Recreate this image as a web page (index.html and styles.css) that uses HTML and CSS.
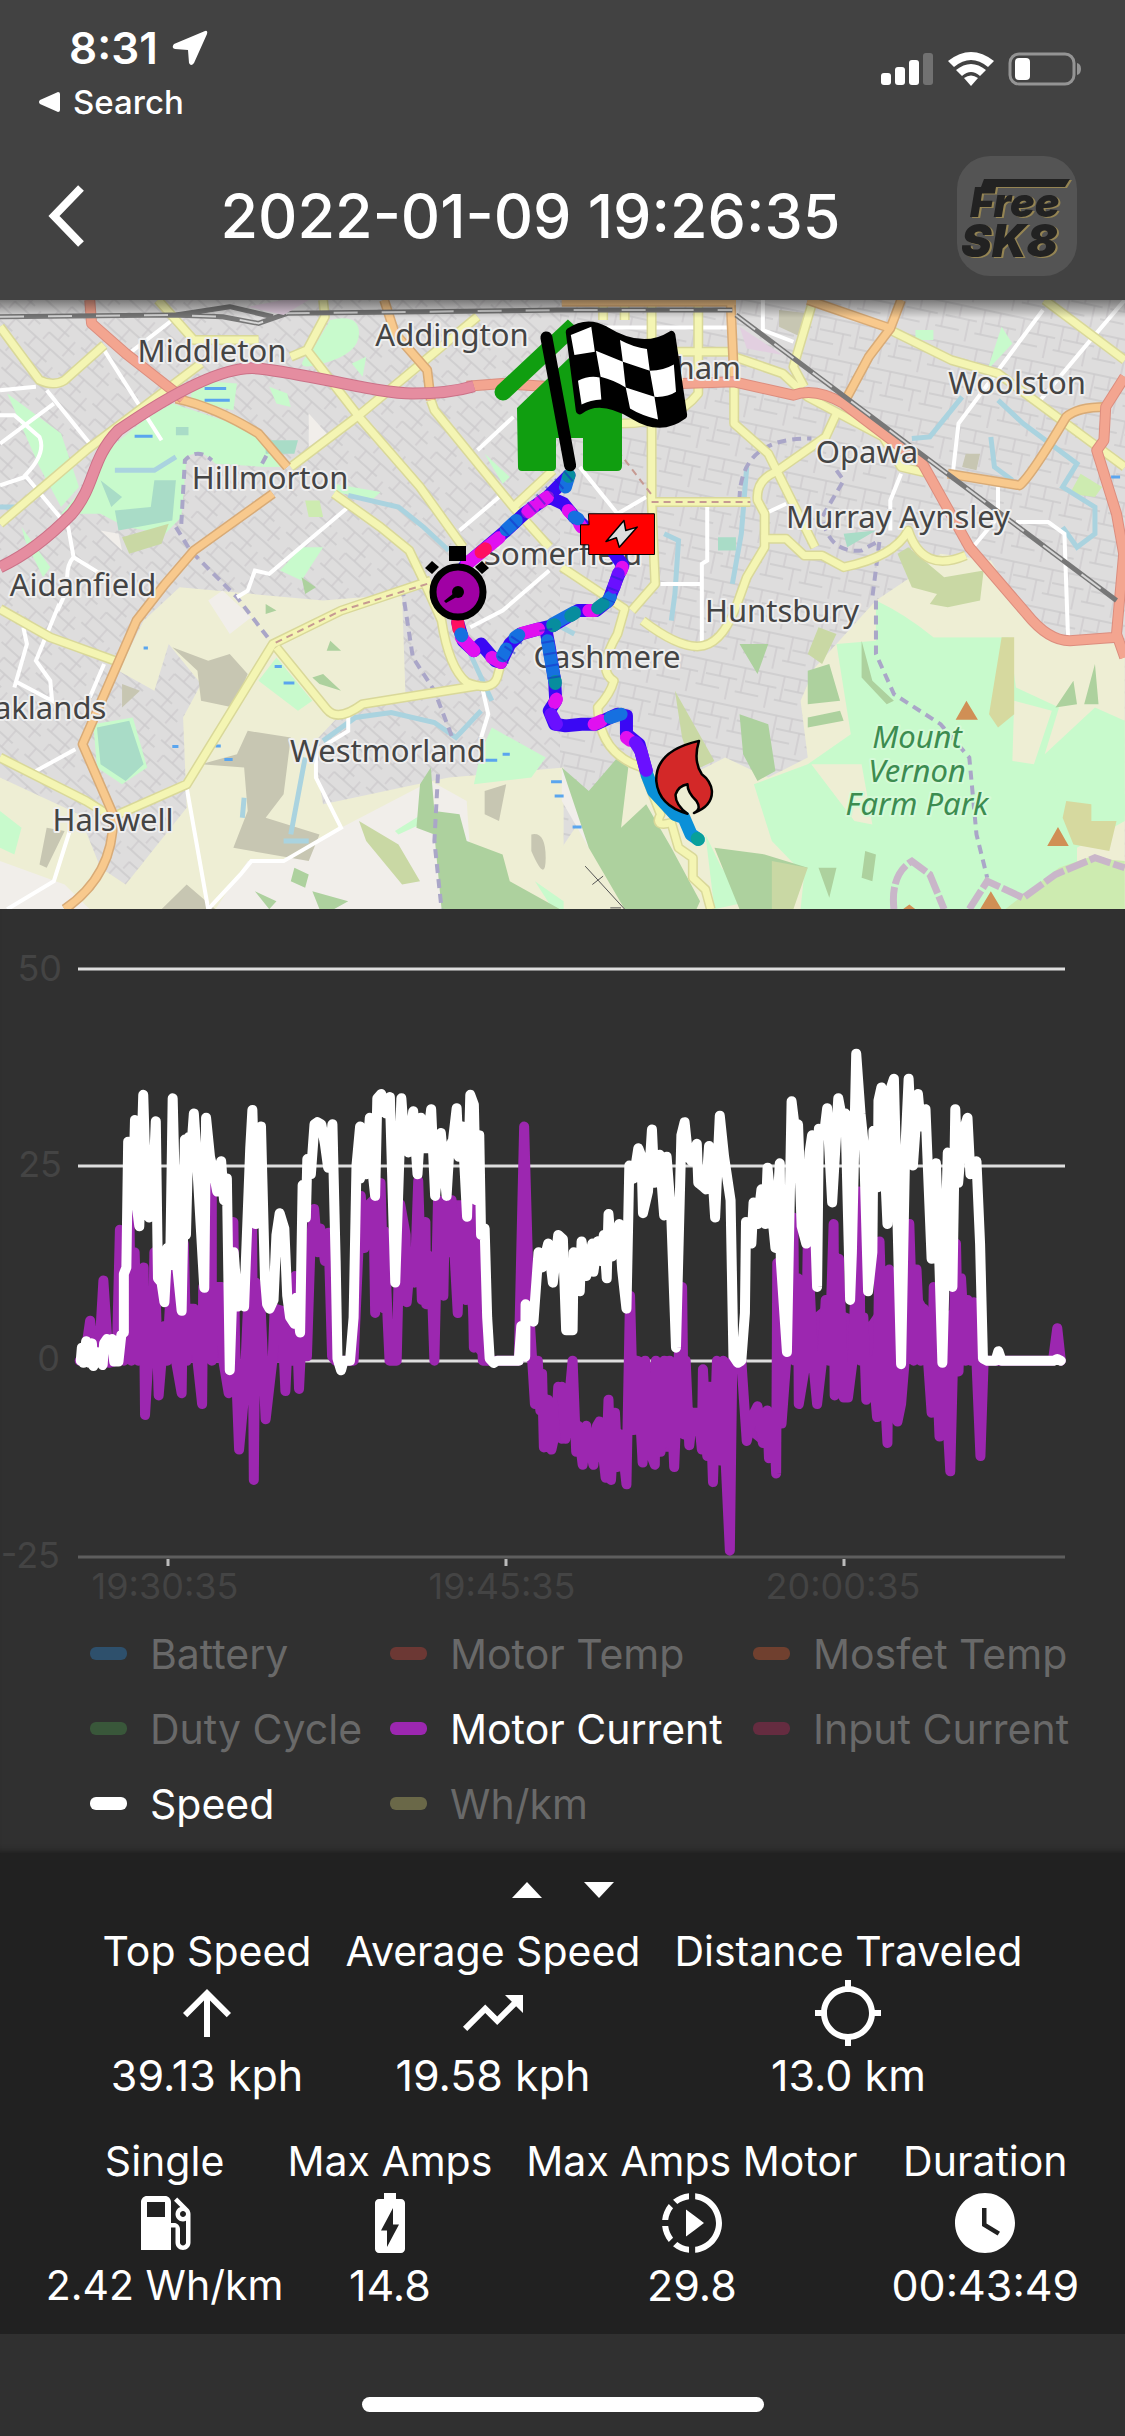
FILE: index.html
```html
<!DOCTYPE html>
<html lang="en">
<head>
<meta charset="utf-8">
<meta name="viewport" content="width=device-width, initial-scale=1">
<title>Ride log</title>
<link rel="stylesheet" href="styles.css">
</head>
<body>
<header class="header">
  <div class="status">
    <div class="status-left">
      <div class="clock">8:31
        <svg class="location" viewBox="0 0 36 36" aria-hidden="true"><path d="M33 1 2 14Q-1 18 3 19L16 20 17 33Q19 37 22 33L35 4Q36 0 33 1Z"/></svg>
      </div>
      <a class="back-app" href="#"><svg class="tri" viewBox="0 0 22 22" aria-hidden="true"><path d="M20 1 2 9Q0 11 2 13L20 21Q22 21 22 19V3Q22 1 20 1Z"/></svg>Search</a>
    </div>
    <svg class="radios" viewBox="0 0 204 36" aria-hidden="true">
      <rect x="0" y="22" width="10" height="12" rx="3"/><rect x="14" y="16" width="10" height="18" rx="3"/><rect x="28" y="9" width="10" height="25" rx="3"/><rect x="42" y="2" width="10" height="32" rx="3" opacity=".25"/>
      <path d="M67 10Q90-8 113 10L107 16Q90 2 73 16ZM75 19Q90 7 105 19L99 25Q90 17 81 25ZM83 27Q90 22 97 27L90 35Z"/>
      <rect x="129" y="3" width="64" height="30" rx="9" fill="none" stroke="#949494" stroke-width="3"/><rect x="134" y="7" width="15" height="22" rx="4"/><path d="M196 12Q200 13 200 18T196 24Z" fill="#949494"/>
    </svg>
  </div>
  <div class="appbar">
    <button class="back" aria-label="Back"><svg viewBox="0 0 36 62"><path d="M33 3 6 31 33 59" fill="none" stroke="#fff" stroke-width="8"/></svg></button>
    <h1 class="title">2022-01-09 19:26:35</h1>
    <svg class="logo" viewBox="0 0 120 120" role="img" aria-label="Free SK8">
      <rect width="120" height="120" rx="33" fill="#545454"/>
      <g class="logo-mark"><path d="M27 23H113L108 31H24Z"/><text class="logo-type logo-free" x="13" y="61">Free</text><text class="logo-type logo-sk" x="4" y="101">SK8</text></g>
    </svg>
  </div>
</header>

<main>
<svg class="map" viewBox="0 0 1125 609" role="img" aria-label="Map of the ride">
  <defs>
    <pattern id="streets" width="46" height="34" patternUnits="userSpaceOnUse" patternTransform="rotate(42)"><path d="M0 3H46M0 15H30M12 25H46M5 3V15M24 3V25M38 15V34M12 25V37" fill="none" stroke="#cccacc" stroke-width="1.3"/></pattern>
    <pattern id="streets2" width="40" height="40" patternUnits="userSpaceOnUse" patternTransform="rotate(12)"><path d="M0 5H40M8 18H40M0 30H24M6 5V30M22 5V18M32 18V45" fill="none" stroke="#cccacc" stroke-width="1.3"/></pattern>
    <g id="yellow">
      <path d="M0 80 110 240Q150 260 180 240L290 135M0 670 240 450 560 190M440 0 540 120 720 120M900 0 905 50 855 150 1000 350 1170 560 1290 740M810 170 855 150M1330 50 1000 345 810 500M1200 300 1210 330 1430 620 1530 740M1430 620 1540 510M930 580 1060 680 1140 750 1180 840 1230 960Q1250 1100 1300 1145 1370 1175 1385 1130L1395 1090M1200 840 950 930 760 1030 520 1450 330 1540M770 1040 910 1225Q940 1265 1010 1210L1330 1155M0 925 140 1010 320 1080M0 1370 240 1500 300 1540"/>
      <path d="M2910 0 3133 180M2480 90 2650 180 2780 220 3133 500M2265 0 2210 200 2240 260M2045 170 2180 220 2250 290 2460 410 2510 500 2590 520M2330 340 2300 410 2160 515Q2105 540 2110 600L2130 640V740L2080 830 2060 890Q2020 1020 1960 1035T1790 960M2045 250V370L2140 460 2270 740M2120 715H2190L2240 765H2290L2350 800Q2490 770 2530 690 2570 820 2690 765M1815 0V600L1825 850 1760 930M1945 0V280Q1880 370 1730 370M1740 0V60M1680 0V60M1880 155H2045M1815 605H2090"/>
      <path d="M1565 800 1740 925 1720 1000Q1660 1110 1710 1140 1700 1180 1665 1220 1670 1360 1790 1400L1840 1540Q1820 1580 1870 1565L1890 1640 1930 1670 1930 1730 1965 1765 1980 1824"/>
    </g>
    <path id="motorway" d="M0 800Q100 750 200 640C270 550 250 480 330 390Q600 190 720 205C880 225 1050 280 1150 280Q1250 280 1320 258"/>
    <path id="trunk" d="M250 0 255 70 350 160 510 295M1300 258 1400 250 1565 262 2045 245 2210 285Q2270 260 2350 310L2570 490 2700 740 2860 940Q2920 1020 2980 1020L3110 1010M3133 230 3080 320 3075 420 3055 450 3110 640 3130 760 3110 1000 3133 1070"/>
    <path id="primary" d="M490 295Q600 320 720 400L800 500M760 580 540 750 460 850 380 960 230 1330 315 1540Q320 1720 180 1824M1070 0 1100 100 1190 210 1200 300M2035 0 2045 240M2250 0 2480 85 2510 0M2480 85 2420 170 2360 290M1565 5H2050M2640 520 2840 555Q2870 530 2970 350 3000 320 3080 320"/>
    <path id="route" d="M1585 525 1525 590 1460 640 1410 690 1300 790 1278 820M1275 965 1290 1020 1320 1050 1340 1030 1380 1080 1395 1085 1420 1030 1450 1000 1500 985 1540 975 1610 930 1660 930 1695 900 1720 830 1735 795 1700 740 1640 690 1600 650 1570 610 1530 590M1520 985 1530 1040 1545 1140 1548 1200 1530 1230 1545 1270 1575 1275 1620 1270 1660 1270 1720 1240 1745 1245 1745 1300 1780 1330 1800 1410"/>
    <linearGradient id="shade" x1="0" y1="0" x2="0" y2="1"><stop stop-color="#000" stop-opacity=".45"/><stop offset="1" stop-color="#000" stop-opacity="0"/></linearGradient>
  </defs>
  <rect width="1125" height="609" fill="#dedddd"/>
  <rect width="560" height="609" fill="url(#streets)"/>
  <rect x="560" width="565" height="609" fill="url(#streets2)"/>

  <g transform="scale(.359 .334)" class="terrain">
    <g class="farm">
      <path d="M500 860 900 900 1120 880 1130 1200 1050 1200 940 1250 870 1330 900 1510 1250 1430 1570 1400 1570 1824 0 1824 0 1430 100 1480 220 1540 280 1700 350 1750 520 1520 510 1250 560 1150 470 1030 430 1170 330 1110 400 960Z"/>
      <path d="M1565 1640 1720 1390 1780 1400 1890 1440 2020 1370 2140 1430 2250 1370 2230 1200 2270 1100 2440 900 2550 820 2620 760 2760 780 2850 940 2930 1020 3133 1030V1824H1565Z"/>
    </g>
    <path fill="#f1eeea" d="M950 1580 1200 1440 1300 1500 1320 1824 600 1824 690 1680 800 1680ZM0 1680 180 1750 250 1824H0ZM620 870 700 950 640 1000 580 900ZM860 340 910 400 860 440ZM280 690 330 700 340 750ZM1565 1400 1610 1460 1680 1620 1640 1640 1565 1500Z"/>
    <g fill="#c7c6b2">
      <path d="M480 1040 580 1080 640 1060 690 1120 650 1220 560 1200 550 1110ZM690 1290 810 1310 790 1480 740 1550 890 1600 860 1680 650 1640 690 1530 680 1400 560 1390 660 1360ZM1350 1470 1410 1450 1390 1560 1350 1540ZM1480 1600Q1520 1590 1520 1670T1480 1650ZM520 1750 600 1824H450ZM340 1150 390 1170 340 1220ZM130 1580 180 1590 130 1700 110 1690Z"/>
      <path d="M2170 30 2250 40 2230 110 2170 80ZM2690 460 2730 460 2720 510 2680 500Z"/>
    </g>
    <g fill="#c8facc">
      <path d="M480 310 650 370Q770 440 800 500L740 500 600 490Q560 440 520 470L505 650 460 700 350 680 280 640 170 640 250 540 310 440 400 360ZM20 280 170 400 220 560 170 620 110 500ZM540 240 660 250 650 330 530 300ZM920 60Q1000 40 1000 100T900 190 870 150ZM930 550 1060 575 1040 595 930 575ZM1350 460 1420 530 1400 550ZM840 740 900 740 840 840 780 810ZM750 260 800 280 810 320 770 310ZM2790 80 2820 130 2750 210ZM60 680 140 800 120 830 70 720ZM980 190 1020 170 1010 230ZM2550 90H2600V120H2550Z"/>
      <path d="M260 1270 370 1250 410 1400 340 1450 270 1400ZM770 1070 870 1200 830 1230 720 1140ZM1370 1280 1520 1370 1480 1430 1320 1450 1340 1350ZM0 1530 60 1580 40 1660 0 1640ZM1100 1590 1190 1530 1170 1570 1110 1600ZM1490 1740 1570 1800V1824H1540Z"/>
      <path d="M2330 1030 2440 1020V900Q2520 940 2600 1010L2810 1010 2830 1160 2950 1220 2910 1360 3070 1400 3133 1480V1560L3000 1640 3000 1720 2800 1824H2230L2240 1720 2150 1620 2100 1450 2250 1390 2370 1300Z"/>
      <path d="M3050 1220 3133 1260V1540L2970 1540 2910 1360ZM1965 1600 2010 1700 2090 1800 1990 1824Z"/>
    </g>
    <path class="farm" d="M2260 1390 2400 1390 2430 1570 2380 1560ZM2600 1010 2650 900 2820 930 2820 1010ZM2825 1200 2930 1230 2880 1390 2820 1380Z"/>
    <g fill="#add19e">
      <path d="M1200 1400 1210 1530 1280 1540 1300 1620 1400 1660 1420 1740 1560 1824H1230L1210 1600 1160 1580 1170 1450ZM1565 1400 1640 1470 1720 1370 1750 1400 1730 1580 1800 1510 1870 1640 1950 1800 1940 1824H1740L1640 1640ZM1990 1640 2130 1660 2250 1700 2210 1740 2150 1824H2060ZM2060 1240 2140 1270 2160 1410 2110 1440 2070 1360ZM2250 1110 2310 1090 2340 1200 2250 1210ZM2250 1250 2340 1230 2350 1260 2250 1280ZM2400 1020 2430 1140 2490 1200 2470 1210 2400 1130ZM2060 1030 2140 1030 2110 1120ZM2990 1140 3000 1210 2940 1220ZM3050 1090 3060 1210 3020 1210ZM870 1770 970 1800 930 1824H890ZM710 1770 770 1800 750 1824ZM820 1700 860 1720 850 1760 810 1740ZM920 1020 950 1050 910 1050ZM870 1130 900 1120 950 1170 890 1150ZM2410 1650 2440 1660 2430 1740 2400 1730ZM2280 1700 2330 1700 2310 1790ZM840 830 880 860 850 880ZM740 910 770 930 740 940Z"/>
    </g>
    <g fill="#c9d8a4">
      <path d="M340 710 470 670 450 730 360 760ZM1000 1560 1110 1630 1170 1740 1120 1750 1020 1620ZM1880 1170 1990 1380 1930 1410 1900 1310ZM2280 980 2330 1000 2290 1090 2250 1060ZM2500 760 2540 860 2610 880 2590 910 2640 920 2730 900 2740 810 2630 830 2530 740ZM2150 1680 2250 1700 2210 1824H2150Z"/>
      <path d="M3010 520 3070 560 3050 590 2980 580ZM850 600 890 600 900 650 860 650Z" fill="#cdebb0"/>
      <path d="M3030 1670 3133 1680V1824H2800L2950 1700Z" fill="#cdebb0"/>
    </g>
    <path fill="#d6d99f" d="M2790 1010 2825 1010 2825 1240 2780 1280 2755 1240ZM2970 1500 3040 1510 3040 1560 3110 1560 3090 1650 2990 1630 2960 1550Z"/>
    <g fill="#a9dcc7"><path d="M430 540 490 540 480 660 330 690 320 630 420 620ZM280 540 340 590 310 620ZM490 380 525 380V405H490ZM740 420 830 420 820 460 740 460ZM270 1280 360 1260 400 1390 350 1440 280 1390ZM2000 710 2050 710 2050 750 2000 750ZM2350 700 2440 690 2360 740Z"/></g>
    <g fill="none" stroke="#aad3df" stroke-width="5">
      <path d="M0 620 60 620M970 585 1110 620 1180 680 1250 750M900 1320 990 1250 1090 1235 1210 1265 1270 1310 1340 1230M850 1370 810 1600M790 1620H860M680 1490 675 1550M1310 1060 1370 1200M320 510 430 510 490 470M1565 980 1600 1000M2540 415 2590 410 2680 290M2780 300 2850 370 3000 490 2960 560 3050 620 3050 700 3000 740 2960 680M2760 410 2770 500 2820 540M1850 700 1890 720 1880 880 1870 960M2080 500 2065 700 2040 850"/>
    </g>
    <path stroke="#5aa5ee" stroke-width="3" d="M375 408H425M570 265H630M570 300H640M765 1097H785M790 1147H820M600 1335H615M625 1376H648M480 1337H497M1350 1378H1385M1400 1360H1420M1535 1442H1565M1545 1485H1570M1595 1578H1620M3095 530H3120M400 1042H412"/>
    <path fill="none" stroke="#aaa6c8" stroke-width="4" stroke-dasharray="9 6" d="M505 670 515 480Q550 440 590 480M730 490 750 450M2060 600Q2060 410 2260 415M2330 510 2350 540 2290 650Q2310 760 2400 750L2450 720 2430 890M1220 1420 1210 1620 1230 1824M490 680 530 750 660 890 760 1030M1120 860 1150 1070 1210 1170 1260 1310M2440 900 2440 1060 2490 1180 2620 1270 2700 1370 2720 1600 2750 1730"/>
    <path fill="none" stroke="#c9b6c9" stroke-width="7" stroke-dasharray="22 3" d="M2490 1824Q2480 1720 2540 1680L2590 1720 2630 1824M2700 1824 2750 1740 2850 1790 2940 1720 3050 1670 3133 1700"/>
    <path fill="none" stroke="#fff" stroke-width="4" d="M0 270 100 260M290 150 450 420M130 270 250 430M0 430 150 310M0 345H40L110 410Q130 460 70 525L190 680 205 770 280 820M0 555 70 530M205 770Q180 800 190 860L160 930M360 160 480 60M970 620 750 820 710 810 690 870 660 890M1430 350 1330 450M1390 590 1280 690M1530 810 1400 930 1310 980M165 910 100 1080 140 1140 145 1200 40 1140M65 980 75 1030 40 1160M290 1090 250 1190M210 1345 100 1410M200 1570 150 1740 20 1824M520 1460 580 1824 670 1720 700 1680H790L950 1580 880 1430V1350L970 1290V1240M1345 1170 1360 1240 1340 1310M1640 82H2030M2125 0V90L2210 125M2905 30 2670 370 2655 510M3133 0 3030 130 2890 310M1615 500 1720 640 1800 590M1970 620V780L1955 790V1030M1840 850H1955M2510 520 2480 600V690M2780 560V650L2710 740M2830 665H2920L2965 700 2975 1010M2190 610 2130 640"/>
    <g fill="none" stroke-linejoin="round">
      <use href="#yellow" stroke="#d9d899" stroke-width="10"/><use href="#yellow" stroke="#f4f5b3" stroke-width="7"/>
      <path stroke="#c69a92" stroke-width="2" stroke-dasharray="7 5" d="M1190 850 950 930 760 1030M1815 605H2090M1720 450 1820 590"/>
      <use href="#primary" stroke="#d8ab77" stroke-width="10"/><use href="#primary" stroke="#f8c98d" stroke-width="7"/>
      <use href="#trunk" stroke="#dc8d7e" stroke-width="11"/><use href="#trunk" stroke="#f3a590" stroke-width="9"/>
      <use href="#motorway" stroke="#cb7187" stroke-width="12"/><use href="#motorway" stroke="#e58da0" stroke-width="10"/>
      <path stroke="#777" stroke-width="5" d="M0 50 480 45 620 50 720 70 800 40 1565 30 2040 30M490 45 640 20 760 50M2050 45 3110 900"/>
      <path stroke="#d6d6d6" stroke-width="2" stroke-dasharray="24 24" d="M0 50 480 45 620 50 720 70 800 40 1565 30 2040 30M2050 45 3110 900"/>
      <path stroke="#555" stroke-width="1" d="M1630 1695 1740 1824M1650 1750 1680 1725M1700 1820H1730"/>
    </g>
    <path fill="#e2cfe0" d="M2060 80 2180 165 2080 145ZM690 20 790 0H860L790 45Z"/>
    <path fill="#d08f55" d="M2662 1257 2692 1200 2724 1257ZM2917 1635 2947 1578 2977 1635ZM2730 1824 2760 1770 2790 1824ZM2515 1824 2533 1810 2550 1824Z"/>
  </g>

  <g class="place">
    <text x="212" y="62">Middleton</text><text x="452" y="46">Addington</text><text x="270" y="189">Hillmorton</text><text x="83" y="296">Aidanfield</text><text x="563" y="265">Somerfield</text><text x="664" y="79">Sydenham</text><text x="1017" y="94">Woolston</text><text x="867" y="163">Opawa</text><text x="898" y="228">Murray Aynsley</text><text x="782" y="322">Huntsbury</text><text x="607" y="368">Cashmere</text><text x="388" y="462">Westmorland</text><text x="113" y="531">Halswell</text><text x="38" y="419">Oaklands</text>
  </g>
  <g class="place place-park"><text x="917" y="448">Mount</text><text x="917" y="482">Vernon</text><text x="917" y="515">Farm Park</text></g>

  <path fill="#109e10" d="M517 108 569 58 622 108V166Q622 171 617 171H587Q583 171 583 167V138H556V167Q556 171 552 171H522Q518 171 518 167Z"/>
  <path fill="none" stroke="#109e10" stroke-width="17" stroke-linecap="round" d="M503 92 568 31 622 80"/>

  <g transform="scale(.359 .334)" class="terrain" fill="none" stroke-linecap="round" stroke-linejoin="round">
    <use href="#route" stroke="#3a08f4" stroke-width="13"/>
    <g stroke-width="13">
      <path stroke="#e010f0" d="M1525 590 1505 605M1485 620 1470 635M1390 712 1300 790M1285 1010 1320 1050M1370 1070 1395 1085M1455 998 1500 985M1550 1195 1545 1205M1655 930 1640 930M1733 800 1730 810M1655 1270 1675 1260M1745 1310 1755 1318M1620 680 1615 672M1583 630 1588 636"/>
      <path stroke="#ff1060" d="M1352 745 1340 755M1275 965 1278 985"/>
      <path stroke="#1670e0" d="M1438 660 1410 688M1284 1000 1286 1005M1400 1065 1410 1045M1435 1010 1445 1003M1525 1020 1545 1140M1610 655 1600 650M1540 970 1600 935M1575 560 1582 535M1690 905 1700 890M1700 1250 1730 1240"/>
      <path stroke="#078d9e" d="M1585 525 1584 528M1600 938 1590 945M1665 922 1680 910M1540 975 1545 972M1547 1142 1547 1148"/>
      <path stroke="#0a90d8" d="M1802 1420 1820 1470 1880 1540 1905 1550 1925 1600 1945 1615"/><path stroke="#08a09a" d="M1942 1612 1945 1615"/>
      <path stroke="#6a10ff" d="M1770 1325 1785 1350 1800 1408M1722 820 1710 860M1535 1240 1550 1270"/>
    </g>
    <path stroke="#1828c8" stroke-width="13" stroke-opacity=".5" stroke-linecap="butt" stroke-dasharray="2 10" d="M1585 525 1460 640 1400 700M1400 1080 1450 1000M1520 985 1545 1140M1720 830 1695 900"/>
    <path stroke="#000" stroke-width="12" d="M1522 112 1588 495"/>
    <path fill="#000" stroke="#000" stroke-width="8" d="M1587 95Q1635 60 1685 90 1790 160 1870 105L1903 345Q1840 395 1765 345 1670 285 1615 330Z"/>
    <path fill="#fff" stroke="none" d="M1590 105 1647 80 1657 155 1600 165ZM1727 120Q1765 142 1802 147L1810 212 1735 185ZM1660 152 1735 185 1743 262Q1710 240 1673 230ZM1810 212Q1850 210 1877 193L1883 275Q1860 292 1823 290ZM1610 242Q1640 225 1670 232L1675 298Q1645 300 1620 313ZM1743 262 1823 290 1833 358Q1785 345 1755 325Z"/>
    <path fill="red" stroke="#000" stroke-width="1" d="M1640 640H1823V762H1640V733H1617V673H1640Z"/>
    <path fill="#ddd" stroke="#000" stroke-width="1.5" d="M1738 660 1688 723 1717 712 1725 740 1775 680 1743 690Z"/>
    <path fill="#d32828" stroke="#000" stroke-width="2.5" d="M1947 1320Q1825 1350 1828 1440 1835 1515 1915 1538 1880 1510 1882 1480 1890 1455 1915 1450 1915 1475 1940 1500 1955 1525 1933 1536 1985 1515 1983 1470 1980 1440 1955 1420 1930 1380 1947 1320Z"/>
  </g>
  <path d="M449 246H466V261H449ZM432 261 439 267 432 274 425 268ZM482 261 489 268 482 274 475 267Z"/>
  <circle cx="458" cy="292" r="25" fill="#a000a4" stroke="#000" stroke-width="7"/><circle cx="458" cy="292" r="6"/><path d="M459 289 462 294 446 303 444 301Z"/>
  <rect width="1125" height="18" fill="url(#shade)"/>
</svg>

<section class="chart-card">
  <svg class="chart" viewBox="0 0 1125 707" role="img" aria-label="Motor current and speed over time">
    <g stroke="#dedede" stroke-width="3"><path d="M78 60H1065M78 257H1065M78 452H1065"/><path stroke="#5e5e5e" d="M78 648H1065"/><path stroke="#bbb" d="M168 650V657M506 650V657M844 650V657"/></g>
    <g class="tick tick-y"><text x="62" y="72">50</text><text x="62" y="268">25</text><text x="60" y="462">0</text><text x="60" y="659">-25</text></g>
    <g class="tick tick-x"><text x="165" y="690">19:30:35</text><text x="502" y="690">19:45:35</text><text x="843" y="690">20:00:35</text></g>
    <g transform="translate(0 31) scale(.359 .4337)" class="series">
      <path fill="#9c27b0" stroke="none" d="M355 975V880L400 860 460 890 540 860 620 830 630 975ZM676 1030 685 860 725 850 735 960 700 1000ZM765 860H790L830 975H770ZM860 705 890 660 910 700V730L890 725ZM1000 700 1010 610H1060L1070 800 1045 850 1035 700ZM1140 780 1165 600 1200 740 1190 820ZM1210 600H1250L1320 600 1335 960 1315 940 1300 820 1250 700 1220 800ZM1600 1130H1730V1190L1600 1180ZM1770 975H1905L1890 1180H1780ZM1960 1090 2020 970 2040 1190 1960 1150ZM2085 1100H2160V1190L2085 1140ZM2210 975V900L2300 840 2420 880 2520 760 2600 870 2710 830V975ZM2440 1000 2510 970 2500 1100 2470 1120Z"/>
      <path stroke="#9c27b0" d="M222 970 235 970 251 878 262 970 275 970 288 785 303 975 325 970 334 668 345 970 360 600 366 970 375 720 385 970 400 755 404 1095 418 900 425 970 430 720 442 1050 458 890 465 970 480 740 490 970 506 1045 512 700 520 970 528 850 540 850 550 970 563 1070 566 800 575 960 590 560 590 970 605 800 617 800 622 970 637 1045 650 650 655 940 666 1175 680 1050 690 860 702 640 707 1245 712 790 725 830 740 1105 760 960 765 850 785 855 795 1040 805 860 815 970 822 775 833 1035 845 830 855 960 865 700 875 620 885 720 892 665 905 740 915 675 925 960 935 970 985 970 1005 590 1015 710 1028 610 1040 600 1045 860 1060 560 1070 850 1070 670 1080 880 1085 970 1105 970 1115 610 1130 680 1133 835 1145 720 1155 790 1165 555 1175 830 1185 650 1187 840 1200 730 1210 970 1220 600 1235 820 1240 600 1255 720 1258 600 1275 860 1283 630 1298 830 1310 500 1320 940 1325 600 1345 970 1445 970 1460 430 1475 870 1490 1070 1498 970 1505 1085 1510 1000 1515 1170 1526 1060 1536 1175 1548 1130 1555 1030 1565 1150"/>
      <path stroke="#9c27b0" transform="translate(1565 0)" d="M0 1030 10 1150 30 970 40 1180 45 1120 58 1210 68 1120 88 1210 98 1120 105 1110 122 1240 130 1060 137 1245 148 1090 155 1215 165 1140 180 1255 190 820 200 1130 210 970 225 1205 232 970 245 1180 259 1210 262 970 275 1180 285 970 295 1160 300 970 313 1215 325 970 335 800 340 1140 345 970 355 1165 365 1090 380 1090 390 1175 393 990 405 1190 412 1030 421 1250 432 970 440 1200 450 970 455 1180 468 1408 475 970 500 970 515 1155 530 1100 545 1075 560 1160 572 1085 577 1195 590 1100 597 1230 600 745 612 1115 625 970 645 640 648 970 658 780 660 1070 680 970 685 700 700 970 711 1070 725 970 735 830 745 970 757 655 760 1050 772 735 785 1055 797 1055 810 970 828 580 832 970 840 870 848 1060 865 970 878 1100 885 695 895 970 907 1160 912 760 935 1110 945 1070 955 970 968 655 980 970 988 760 1000 970 1008 850 1020 970 1030 1090 1036 800 1052 1145 1065 970 1082 1225 1098 700 1105 995 1112 780 1125 970 1130 830 1140 970 1148 835 1166 1190 1175 970 1368 970 1380 895 1390 970"/>
      <path stroke="#fff" d="M225 970 228 940 232 975 240 925 248 975 256 930 260 982 270 950 278 970 286 980 290 930 298 920 305 935 312 920 318 972 330 972 338 910 345 905 345 770 352 755 357 465 362 540 370 605 376 415 382 620 388 660 399 357 408 600 415 640 425 600 434 418 440 780 450 790 458 835 466 710 474 750 481 365 492 740 506 855 515 460 518 680 525 455 533 480 540 400 548 500 569 802 574 410 585 500 596 540 605 580 616 510 624 600 632 550 640 992 651 720 662 845 670 800 680 845 697 480 703 392 712 655 727 430 738 780 744 840 751 850 762 830 770 680 779 630 792 665 800 820 808 870 820 885 825 825 836 905 843 565 852 640 856 505 866 540 876 425 884 420 895 425 905 470 914 525 926 425 935 740 940 965 950 992 957 970 975 970 985 870 993 520 1003 430 1003 550 1012 500 1020 540 1030 410 1036 520 1045 590 1051 365 1062 355 1075 400 1086 362 1101 790 1118 365 1128 480 1138 490 1151 395 1163 540 1172 410 1180 480 1188 480 1201 390 1212 590 1228 445 1244 590 1252 480 1262 460 1272 388 1278 500 1288 430 1301 638 1310 357 1320 380 1326 600 1335 450 1340 680 1350 665 1357 870 1364 965 1375 975 1385 970 1445 970 1452 890 1463 960 1464 840 1475 870 1486 880 1500 720 1510 755 1527 700 1540 790 1555 680 1568 690 1577 900 1595 900 1598 720 1615 810 1620 695 1633 775 1650 700 1653 765 1665 695"/>
      <path stroke="#fff" transform="translate(1565 0)" d="M100 695 108 740 117 680 125 780 130 632 140 730 150 690 160 655 168 760 180 850 188 520 200 550 213 480 222 500 226 630 240 580 251 437 258 560 272 495 285 635 292 500 305 640 318 940 333 450 342 420 352 500 362 510 376 470 380 560 395 570 402 575 410 475 418 520 427 640 440 405 452 500 470 600 478 960 490 975 500 970 510 860 513 650 528 700 534 605 545 655 556 575 567 655 573 525 595 710 607 515 610 740 627 950 640 372 650 440 658 425 668 660 681 700 690 490 697 450 711 800 716 435 730 450 739 388 753 605 770 365 778 400 790 400 803 830 808 720 820 262 832 400 842 480 853 810 865 720 868 440 880 570 882 370 890 340 907 655 913 350 925 320 945 978 956 500 966 320 978 520 992 355 1000 430 1013 390 1030 735 1042 515 1050 700 1060 975 1075 490 1088 800 1096 390 1104 560 1115 450 1130 410 1138 540 1155 510 1165 700 1173 965 1185 970 1208 970 1216 948 1225 970 1370 970 1380 966 1390 970"/>
    </g>
  </svg>
  <div class="legend">
    <button class="key"><i class="swatch blue"></i>Battery</button><button class="key"><i class="swatch red"></i>Motor Temp</button><button class="key"><i class="swatch orange"></i>Mosfet Temp</button>
    <button class="key"><i class="swatch green"></i>Duty Cycle</button><button class="key on"><i class="swatch purple"></i>Motor Current</button><button class="key"><i class="swatch pink"></i>Input Current</button>
    <button class="key on"><i class="swatch white"></i>Speed</button><button class="key"><i class="swatch olive"></i>Wh/km</button>
  </div>
</section>

<section class="stats">
  <div class="arrows">
    <button class="arrow" aria-label="Expand"><svg viewBox="0 0 30 16"><path d="M0 16 15 0 30 16Z"/></svg></button>
    <button class="arrow" aria-label="Collapse"><svg viewBox="0 0 30 16"><path d="M0 0 15 16 30 0Z"/></svg></button>
  </div>
  <div class="row">
    <div class="stat"><span>Top Speed</span><svg class="icon" viewBox="0 0 24 24"><path d="M4 12l1.41 1.41L11 7.83V20h2V7.83l5.58 5.59L20 12l-8-8-8 8z"/></svg><span class="value">39.13 kph</span></div>
    <div class="stat"><span>Average Speed</span><svg class="icon" viewBox="0 0 24 24"><path d="M16 6l2.29 2.29-4.88 4.88-4-4L2 16.59 3.41 18l6-6 4 4 6.3-6.29L22 12V6z"/></svg><span class="value">19.58 kph</span></div>
    <div class="stat"><span>Distance Traveled</span><svg class="icon" viewBox="0 0 24 24"><path d="M20.94 11c-.46-4.17-3.77-7.48-7.94-7.94V1h-2v2.06C6.83 3.52 3.52 6.83 3.06 11H1v2h2.06c.46 4.17 3.77 7.48 7.94 7.94V23h2v-2.06c4.17-.46 7.48-3.77 7.94-7.94H23v-2h-2.06zM12 19c-3.87 0-7-3.13-7-7s3.13-7 7-7 7 3.13 7 7-3.13 7-7 7z"/></svg><span class="value">13.0 km</span></div>
  </div>
  <div class="row">
    <div class="stat economy"><span>Single</span><svg class="icon" viewBox="0 0 24 24"><path d="M19.77 7.23l.01-.01-3.72-3.72L15 4.56l2.11 2.11c-.94.36-1.61 1.26-1.61 2.33 0 1.38 1.12 2.5 2.5 2.5.36 0 .69-.08 1-.21v7.21c0 .55-.45 1-1 1s-1-.45-1-1V14c0-1.100-.9-2-2-2h-1V5c0-1.100-.9-2-2-2H6c-1.100 0-2 .9-2 2v16h10v-7.500h1.500v5c0 1.380 1.120 2.500 2.500 2.500s2.500-1.120 2.500-2.500V9c0-.69-.28-1.320-.73-1.770zM12 10H6V5h6v5zm6 0c-.55 0-1-.45-1-1s.45-1 1-1 1 .45 1 1-.45 1-1 1z"/></svg><span>2.42 Wh/km</span></div>
    <div class="stat"><span>Max Amps</span><svg class="icon" viewBox="0 0 24 24"><path d="M15.67 4H14V2h-4v2H8.33C7.600 4 7 4.600 7 5.330v15.330C7 21.400 7.600 22 8.330 22h7.330c.740 0 1.340-.600 1.340-1.330V5.330C17 4.600 16.400 4 15.670 4zM11 20v-5.500H9L13 7v5.500h2L11 20z"/></svg><span class="value">14.8</span></div>
    <div class="stat"><span>Max Amps Motor</span><svg class="icon" viewBox="0 0 24 24"><path d="M13.050 9.790L10 7.500v9l3.050-2.290L16 12zM11 4.070V2.050c-2.010.2-3.840 1-5.320 2.210L7.100 5.690c1.110-.860 2.440-1.440 3.900-1.620zM5.690 7.100L4.260 5.680C3.050 7.160 2.250 8.990 2.050 11h2.020c.180-1.460.760-2.790 1.620-3.900zM4.070 13H2.050c.2 2.010 1 3.840 2.210 5.320l1.430-1.430c-.860-1.100-1.440-2.430-1.620-3.890zM5.680 19.740C7.160 20.950 9 21.750 11 21.950v-2.020c-1.460-.180-2.790-.760-3.900-1.620l-1.420 1.430zM22 12c0 5.160-3.920 9.420-8.950 9.950v-2.020C16.970 19.410 20 16.050 20 12s-3.030-7.410-6.950-7.930V2.050C18.080 2.580 22 6.840 22 12z"/></svg><span class="value">29.8</span></div>
    <div class="stat"><span>Duration</span><svg class="icon" viewBox="0 0 24 24"><path d="M12 2C6.500 2 2 6.500 2 12s4.500 10 10 10 10-4.500 10-10S17.500 2 12 2zm4.200 14.200L11 13V7h1.500v5.200l4.500 2.700-.8 1.300z"/></svg><span class="value">00:43:49</span></div>
  </div>
</section>
</main>
<footer class="footer"><div class="home"></div></footer>
</body>
</html>
```
FILE: styles.css
```css
* { box-sizing: border-box; }
body { margin: 0; min-height: 100vh; display: flex; flex-direction: column; background: #303030; color: #fff; font-family: Inter, "Liberation Sans", sans-serif; }
button { border: 0; padding: 0; background: none; color: inherit; font: inherit; text-align: left; }
svg { display: block; fill: #fff; }
.header { background: #424242; }
.status { display: flex; justify-content: space-between; align-items: flex-start; height: 132px; padding: 20px 40px 0 38px; }
.clock { display: flex; align-items: center; gap: 14px; padding-left: 31px; font-size: 44px; font-weight: 600; line-height: 56px; }
.location { width: 36px; height: 36px; }
.back-app { display: flex; align-items: center; gap: 13px; color: #fff; font-size: 33px; font-weight: 500; line-height: 52px; text-decoration: none; }
.tri { width: 22px; height: 22px; }
.radios { width: 204px; height: 36px; margin-top: 31px; }
.appbar { display: flex; align-items: center; justify-content: space-between; height: 168px; padding: 0 48px; }
.back { width: 56px; }
.back svg { width: 36px; height: 62px; }
.title { margin: 0; font-size: 61px; font-weight: 500; line-height: 72px; white-space: nowrap; }
.logo { width: 120px; height: 120px; }
.logo-mark { fill: #222; filter: drop-shadow(2px 1px 0 #948453); }
.logo-type { font-family: Inter, sans-serif; font-weight: 900; font-style: italic; }
.logo-free { font-size: 41px; }
.logo-sk { font-size: 46px; }
.map { width: 100%; height: auto; fill: #000; }
.map path, .series path { vector-effect: non-scaling-stroke; }
.farm { fill: #eeeed4; }
.place { font: 31px "Noto Sans", sans-serif; text-anchor: middle; fill: #444; stroke: #efefef; stroke-width: 4px; stroke-linejoin: round; paint-order: stroke; }
.place-park { font-style: italic; fill: #3c8c50; stroke: #d5fad8; }
.chart-card { padding-bottom: 13px; box-shadow: inset 0 -8px 8px -8px #111; }
.chart { width: 100%; height: auto; }
.tick { font-size: 36px; fill: #444; }
.tick-y { text-anchor: end; }
.tick-x { text-anchor: middle; }
.series { fill: none; stroke-width: 10px; stroke-linejoin: round; stroke-linecap: round; }
.legend { display: grid; grid-template-columns: 300px 363px 1fr; padding-left: 90px; }
.key { display: flex; align-items: center; gap: 23px; height: 75px; font-size: 41px; color: #696969; white-space: nowrap; }
.key.on { color: #fff; }
.swatch { width: 37px; height: 13px; border-radius: 6px; }
.blue { background: #2e506c; }
.red { background: #6c3834; }
.orange { background: #70402f; }
.green { background: #39573a; }
.purple { background: #9c27b0; }
.pink { background: #652c40; }
.white { background: #fff; }
.olive { background: #6a6848; }
.stats { background: #212121; padding-bottom: 23px; }
.arrows { display: flex; justify-content: center; align-items: center; gap: 42px; height: 71px; }
.arrow svg { width: 30px; height: 16px; }
.row { display: flex; justify-content: center; }
.row + .row { margin-top: 34px; }
.stat { display: flex; flex-direction: column; align-items: center; padding: 0 17px; font-size: 41px; line-height: 52px; white-space: nowrap; }
.economy { margin-right: -30px; }
.value { font-size: 43px; }
.icon { width: 72px; height: 72px; }
.footer { flex: 1; display: flex; justify-content: center; align-items: flex-end; min-height: 102px; padding-bottom: 24px; }
.home { width: 402px; height: 15px; border-radius: 8px; background: #fff; }
```
